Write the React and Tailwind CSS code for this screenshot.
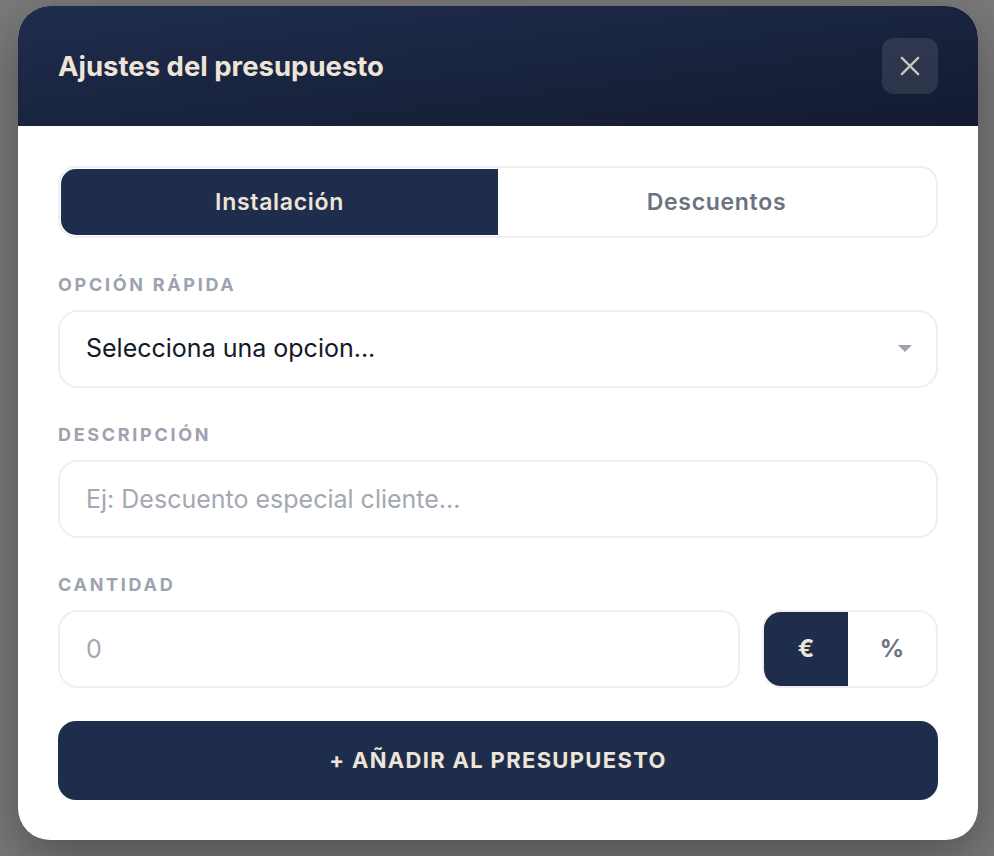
import React from "react";

function Label({ children }) {
  return (
    <div className="h-[20px] leading-[20px] text-[18px] font-bold tracking-[0.15em] text-[#9ca3af] mb-[15px]">
      {children}
    </div>
  );
}

export default function App() {
  return (
    <div
      className="w-[994px] h-[856px] bg-[#7a7a7a] overflow-hidden"
      style={{ fontFamily: "Inter, 'Noto Sans', sans-serif" }}
    >
      <div className="ml-[18px] mt-[6px] w-[960px] h-[834px] rounded-[32px] bg-white overflow-hidden shadow-[0_20px_60px_rgba(0,0,0,0.35)] flex flex-col">
        <div className="h-[120px] shrink-0 bg-gradient-to-br from-[#1f2d4e] to-[#131b30] flex items-center justify-between pl-[40px] pr-[40px]">
          <h2 className="text-[27.5px] font-bold text-[#ede5d8] pt-[2px]">
            Ajustes del presupuesto
          </h2>
          <button className="w-[56px] h-[56px] rounded-[12px] bg-white/10 flex items-center justify-center">
            <svg width="28" height="28" viewBox="0 0 24 24" fill="none" stroke="#c9c6c0" strokeWidth="2" strokeLinecap="round">
              <path d="M5 5 L19 19 M19 5 L5 19" />
            </svg>
          </button>
        </div>

        <div className="flex flex-col px-[40px] pt-[40px]">
          <div className="grid grid-cols-2 h-[72px] rounded-[18px] border-2 border-[#efefef] p-[1px]">
            <button className="rounded-l-[15px] bg-[#1f2d4c] text-[#ede5d8] text-[23px] font-semibold tracking-[0.03em]">
              Instalación
            </button>
            <button className="text-[#6b7280] text-[23px] font-semibold tracking-[0.03em]">Descuentos</button>
          </div>

          <div className="mt-[37px]">
            <Label>OPCIÓN RÁPIDA</Label>
            <div className="h-[78px] rounded-[20px] border-2 border-[#efefef] flex items-center justify-between pl-[26px] pr-[24px]">
              <span className="text-[25px] text-[#111827]">Selecciona una opcion...</span>
              <svg width="14" height="8" viewBox="0 0 14 8">
                <path d="M0 0 L14 0 L7 7 Z" fill="#9ca3af" />
              </svg>
            </div>
          </div>

          <div className="mt-[37px]">
            <Label>DESCRIPCIÓN</Label>
            <input
              className="w-full h-[78px] rounded-[20px] border-2 border-[#efefef] pl-[26px] text-[25px] outline-none placeholder:text-[#a3a8b3]"
              placeholder="Ej: Descuento especial cliente..."
            />
          </div>

          <div className="mt-[37px]">
            <Label>CANTIDAD</Label>
            <div className="flex gap-[22px]">
              <input
                className="flex-1 h-[78px] rounded-[20px] border-2 border-[#efefef] pl-[26px] text-[25px] outline-none placeholder:text-[#a3a8b3]"
                placeholder="0"
              />
              <div className="w-[176px] h-[78px] rounded-[20px] border-2 border-[#efefef] flex">
                <button className="w-[84px] h-full rounded-l-[17px] bg-[#1f2d4c] text-[#ede5d8] text-[24px] font-bold">
                  €
                </button>
                <button className="flex-1 h-full text-[#6b7280] text-[24px] font-bold">%</button>
              </div>
            </div>
          </div>

          <button className="mt-[33px] h-[79px] rounded-[18px] bg-[#1f2d4c] text-[#ede5d8] text-[22px] font-bold tracking-[0.06em]">
            + AÑADIR AL PRESUPUESTO
          </button>
        </div>
      </div>
    </div>
  );
}
